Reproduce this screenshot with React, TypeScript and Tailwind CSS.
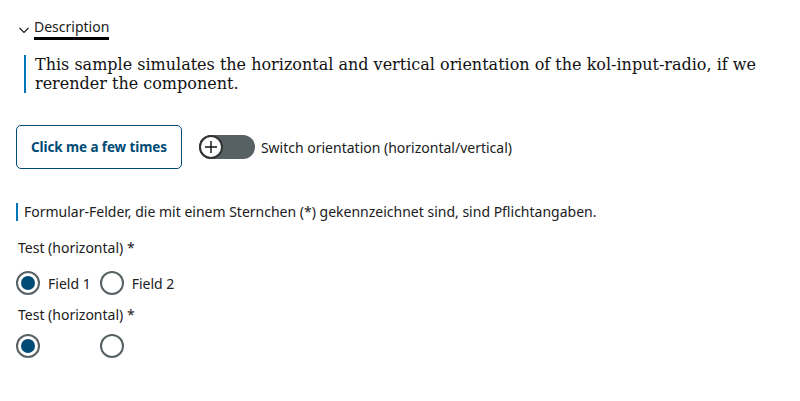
import { useState } from "react";

const sans = "font-['Noto_Sans',sans-serif]";

function Radio({ checked, label }: { checked?: boolean; label?: string }) {
  return (
    <label className="flex items-center gap-2">
      <span className="w-6 h-6 rounded-full border-2 border-[#576164] bg-white flex items-center justify-center">
        {checked && <span className="w-[14px] h-[14px] rounded-full bg-[#004b76]" />}
      </span>
      {label && <span className="text-[14px] text-[#202020]">{label}</span>}
    </label>
  );
}

export default function App() {
  const [vertical, setVertical] = useState(false);

  return (
    <div className={`bg-white min-h-[401px] px-4 pt-[17px] ${sans} text-[#202020]`}>
      {/* Description */}
      <div className="pl-[2px]">
        <div className="flex items-center gap-[4px] text-[14px]">
          <svg width="12" height="12" viewBox="0 0 12 12" className="mt-[2px]">
            <path d="M1.5 4 L6 8.5 L10.5 4" fill="none" stroke="#202020" strokeWidth="1.2" />
          </svg>
          <span className="border-b-[3px] border-black leading-[20px]">Description</span>
        </div>
        <div className="mt-[15px] ml-[6px] border-l-2 border-[#0077b6] pl-[9px] font-['DejaVu_Serif',serif] text-[16px] leading-[19px] text-[#111]">
          This sample simulates the horizontal and vertical orientation of the kol-input-radio, if we
          rerender the component.
        </div>
      </div>

      {/* Controls */}
      <div className="mt-[32px] flex items-center gap-[17px]">
        <button className="h-[44px] px-[14px] rounded-[5px] border border-[#004b76] text-[#004b76] font-bold text-[13.5px] tracking-[-0.1px]">
          Click me a few times
        </button>
        <label className="flex items-center gap-[6px] text-[14px] cursor-pointer" onClick={() => setVertical(!vertical)}>
          <span className="w-[56px] h-[24px] rounded-full bg-[#576164] flex items-center">
            <span className="w-[24px] h-[24px] rounded-full bg-white border-2 border-[#333] flex items-center justify-center">
              <svg width="14" height="14" viewBox="0 0 14 14">
                <path d="M7 1 V13 M1 7 H13" stroke="#111" strokeWidth="1.4" />
              </svg>
            </span>
          </span>
          <span>Switch orientation (horizontal/vertical)</span>
        </label>
      </div>

      {/* Form */}
      <div className="mt-[34px] border-l-2 border-[#0077b6] pl-[6px] text-[14px] leading-[18px]">
        Formular-Felder, die mit einem Sternchen (*) gekennzeichnet sind, sind Pflichtangaben.
      </div>

      <div className="mt-[17px] pl-[2px] text-[14px] leading-[20px]">Test (horizontal) *</div>
      <div className="mt-[13px] flex items-center gap-[9px]">
        <Radio checked label="Field 1" />
        <Radio label="Field 2" />
      </div>

      <div className="mt-[10px] pl-[2px] text-[14px] leading-[20px]">Test (horizontal) *</div>
      <div className="mt-[9px] flex items-center gap-[60px]">
        <Radio checked />
        <Radio />
      </div>
    </div>
  );
}
